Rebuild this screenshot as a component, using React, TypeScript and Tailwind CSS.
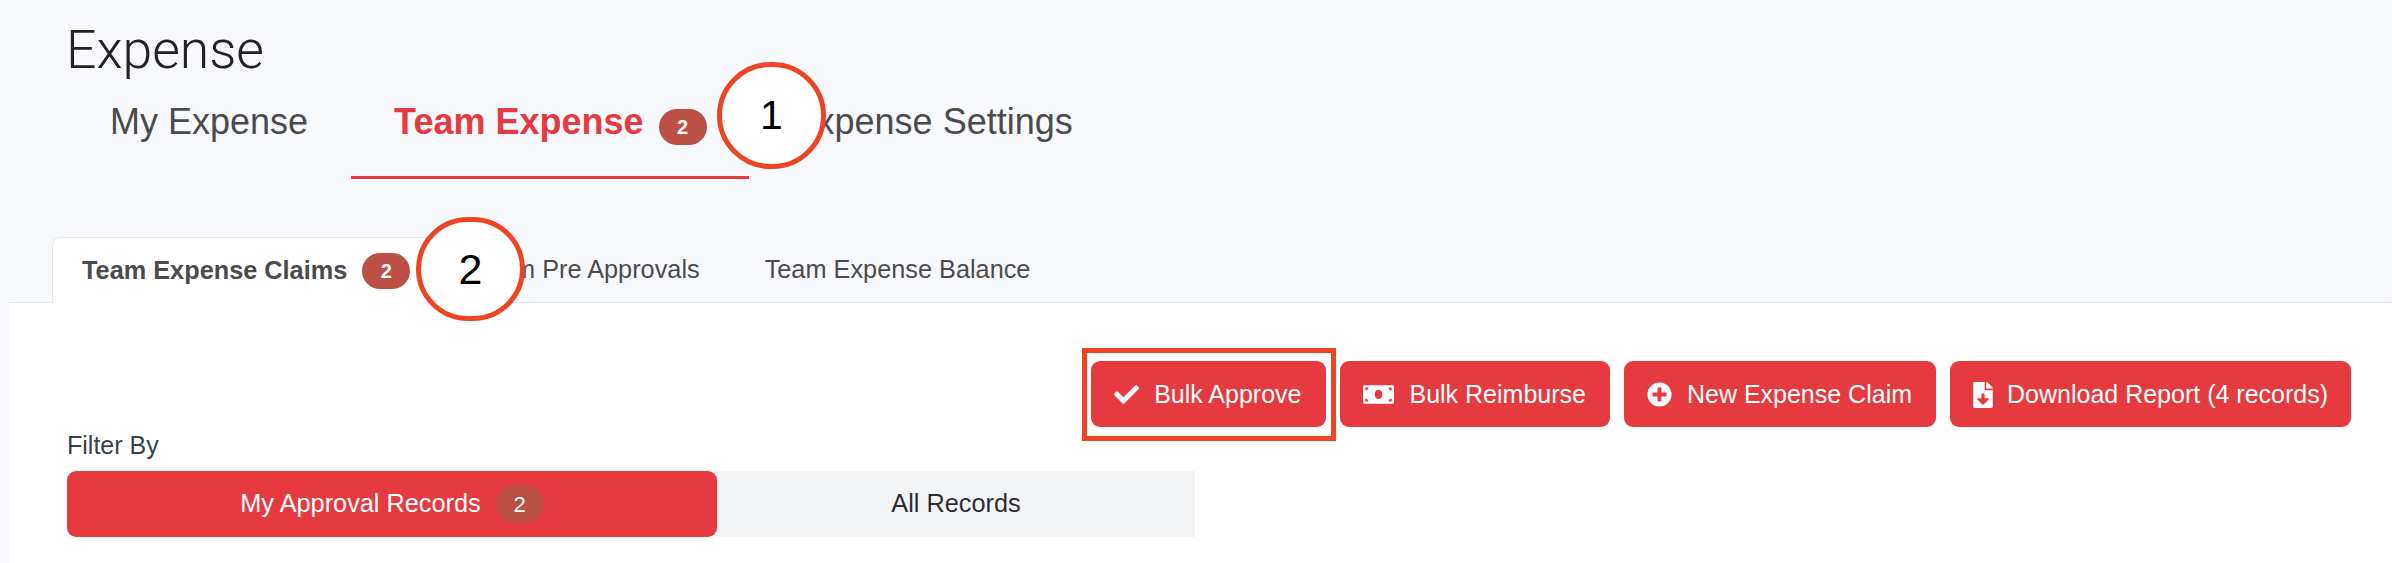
import React from 'react';
import { FaCheck, FaMoneyBill, FaPlusCircle, FaFileDownload } from 'react-icons/fa';

const Badge = ({ className = 'text-[20px] font-bold' }: { className?: string }) => (
  <span className={`flex h-[36px] w-[48px] items-center justify-center rounded-[18px] bg-[#bd5044] text-white ${className}`}>
    2
  </span>
);

const Callout = ({ n, className }: { n: string; className: string }) => (
  <div className={`absolute z-20 flex w-[109px] items-center justify-center rounded-full border-[5px] border-[#ee4423] bg-white text-black ${className}`}>
    {n}
  </div>
);

const ActionButton = ({ icon, label, className = 'gap-[15px] pr-[24px]' }: { icon: React.ReactNode; label: string; className?: string }) => (
  <button className={`flex h-[66px] items-center rounded-[9px] bg-[#e63a41] pl-[23px] pt-px text-[25px] text-white ${className}`}>
    {icon}
    {label}
  </button>
);

export default function App() {
  return (
    <div className="relative h-[563px] overflow-hidden bg-[#f8f9fd] font-['Liberation_Sans',sans-serif]">
      <h1 className="flex h-[85px] items-center pl-[66px] pt-[15px] font-['Roboto',sans-serif] text-[53.5px] font-light leading-none text-[#222222]">Expense</h1>

      <div className="flex pl-[67px] text-[36px] leading-[46px] text-[#4b4b4b]">
        <div className="border-b-[3px] border-transparent px-[43px] pb-[31px] pt-[14px]">My Expense</div>
        <div className="flex items-start gap-[15px] border-b-[3px] border-[#e63a41] pb-[31px] pl-[43px] pr-[42px] pt-[14px] font-bold text-[#e63a41]">
          Team Expense
          <Badge className="mt-[10px] text-[20px] font-bold" />
        </div>
        <div className="border-b-[3px] border-transparent pb-[31px] pl-[44px] pr-[43px] pt-[14px]">Expense Settings</div>
      </div>

      <div className="relative z-10 ml-[52px] mt-[58px] flex h-[66px] text-[25.3px] text-[#4b4b4b]">
        <div className="flex items-center gap-[15px] rounded-t-[8px] border border-b-0 border-[#e5e7eb] bg-white px-[29px] font-bold">
          Team Expense Claims
          <Badge />
        </div>
        <div className="flex items-center pl-[33px] pr-[32px]">Team Pre Approvals</div>
        <div className="flex items-center px-[33px]">Team Expense Balance</div>
      </div>

      <div className="ml-[9px] -mt-px h-[261px] border-t border-[#e5e7eb] bg-white pr-[41px] pt-[58px]">
        <div className="flex justify-end gap-[14px]">
          <div className="relative">
            <ActionButton icon={<FaCheck className="h-[25px] w-[25px]" />} label="Bulk Approve" className="gap-[15px] pr-[25px]" />
            <div className="absolute -bottom-[14px] -left-[9px] -right-[10px] -top-[13px] border-[5px] border-[#ee4423]" />
          </div>
          <ActionButton icon={<FaMoneyBill className="h-[31px] w-[31px]" />} label="Bulk Reimburse" />
          <ActionButton icon={<FaPlusCircle className="h-[25px] w-[25px]" />} label="New Expense Claim" />
          <ActionButton icon={<FaFileDownload className="h-[26px] w-[20px]" />} label="Download Report (4 records)" className="gap-[14px] pr-[23px]" />
        </div>

        <div className="mb-[10px] ml-[58px] mt-[2px] text-[25px] leading-[32px] text-[#374151]">Filter By</div>
        <div className="ml-[58px] flex h-[66px] w-[1128px] text-[25.3px]">
          <div className="flex w-[650px] items-center justify-center gap-[15px] rounded-[9px] bg-[#e63a41] text-white">
            My Approval Records
            <Badge className="text-[22px] font-normal" />
          </div>
          <div className="flex flex-1 items-center justify-center bg-[#f3f4f6] text-[#2d2d33]">All Records</div>
        </div>
      </div>

      <Callout n="1" className="left-[717px] top-[62px] h-[107px] text-[41px]" />
      <Callout n="2" className="left-[416px] top-[217px] h-[104px] text-[43px]" />
    </div>
  );
}
